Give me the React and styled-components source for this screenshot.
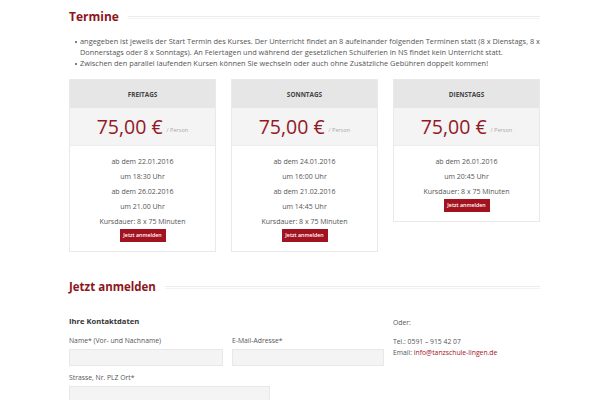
import React from "react";
import styled, { createGlobalStyle } from "styled-components";

const Global = createGlobalStyle`
  html, body { margin: 0; padding: 0; background: #fff; }
  body { font-family: "Open Sans", "Liberation Sans", sans-serif; color: #555; }
  * { box-sizing: border-box; }
`;

const Page = styled.div`
  width: 600px;
  padding: 8px 60px 0 69px;
`;

const SectionHead = styled.div`
  display: flex;
  align-items: center;
  margin-top: ${(p) => p.$mt || 0}px;
`;

const Title = styled.h2`
  margin: 0;
  font-size: ${(p) => p.$size || 12}px;
  line-height: 18px;
  font-weight: 700;
  color: #8c1520;
  white-space: nowrap;
`;

const TitleRule = styled.div`
  flex: 1;
  height: 3px;
  margin-left: 9px;
  border-top: 1px solid #ececec;
  border-bottom: 1px solid #f3f3f3;
`;

const Bullets = styled.ul`
  margin: 10px 0 0 0;
  padding: 0 0 0 11px;
  list-style: none;
  font-size: 7.4px;
  line-height: 11px;
  color: #555;
`;

const Item = styled.li`
  position: relative;
  &::before {
    content: "";
    position: absolute;
    left: -5px;
    top: 4.5px;
    width: 2.4px;
    height: 2.4px;
    border-radius: 50%;
    background: #555;
  }
`;

const Cards = styled.div`
  display: flex;
  align-items: flex-start;
  gap: 15px;
  margin-top: 10px;
`;

const Card = styled.div`
  width: 147px;
  flex: none;
  border: 1px solid #e9e9e9;
  background: #fff;
`;

const CardHead = styled.div`
  height: 28px;
  background: #e6e6e6;
  display: flex;
  align-items: center;
  justify-content: center;
  font-size: 6.4px;
  font-weight: 700;
  color: #444;
  text-transform: uppercase;
`;

const PriceBox = styled.div`
  height: 38px;
  background: #f4f4f4;
  display: flex;
  align-items: center;
  justify-content: center;
  gap: 4px;
  border-bottom: 1px solid #ececec;
`;

const Price = styled.span`
  font-size: 19.5px;
  color: #931826;
  line-height: 1;
`;

const Per = styled.span`
  font-size: 5.6px;
  color: #aaa;
  margin-top: 6px;
`;

const CardBody = styled.div`
  padding: 8px 0 7px;
  text-align: center;
  font-size: 7px;
  line-height: 15px;
  color: #555;
`;

const Button = styled.span`
  display: inline-block;
  width: 46px;
  height: 13px;
  line-height: 13px;
  background: #a3121f;
  color: #fff;
  font-size: 5.3px;
  font-weight: 600;
  vertical-align: top;
`;

const FormRow = styled.div`
  display: flex;
  margin-top: 19px;
`;

const FormMain = styled.div`
  width: 324px;
`;

const SubTitle = styled.div`
  font-size: 7.6px;
  line-height: 12px;
  font-weight: 700;
  color: #333;
`;

const FieldGrid = styled.div`
  display: grid;
  grid-template-columns: 154px 152px;
  column-gap: 9px;
  row-gap: 6px;
  margin-top: 8px;
`;

const Field = styled.div`
  display: flex;
  flex-direction: column;
`;

const Label = styled.label`
  font-size: 6.8px;
  line-height: 11px;
  color: #555;
  margin-bottom: 3px;
`;

const Input = styled.div`
  height: 17px;
  width: ${(p) => p.$w || "100%"};
  background: #f4f4f4;
  border: 1px solid #e8e8e8;
`;

const Aside = styled.div`
  padding-top: 2px;
  font-size: 6.8px;
  line-height: 11px;
  color: #555;
  p { margin: 0; }
`;

const Gap = styled.div`
  height: ${(p) => p.$h}px;
`;

const Link = styled.a`
  color: #a3121f;
  text-decoration: none;
`;

const cards = [
  {
    day: "Freitags",
    lines: ["ab dem 22.01.2016", "um 18:30 Uhr", "ab dem 26.02.2016", "um 21.00 Uhr", "Kursdauer: 8 x 75 Minuten"],
  },
  {
    day: "Sonntags",
    lines: ["ab dem 24.01.2016", "um 16:00 Uhr", "ab dem 21.02.2016", "um 14:45 Uhr", "Kursdauer: 8 x 75 Minuten"],
  },
  {
    day: "Dienstags",
    lines: ["ab dem 26.01.2016", "um 20:45 Uhr", "Kursdauer: 8 x 75 Minuten"],
  },
];

export default function App() {
  return (
    <Page>
      <Global />
      <SectionHead>
        <Title $size={12}>Termine</Title>
        <TitleRule />
      </SectionHead>
      <Bullets>
        <Item>
          angegeben ist jeweils der Start Termin des Kurses. Der Unterricht findet an 8 aufeinander folgenden Terminen statt (8 x Dienstags, 8 x
          Donnerstags oder 8 x Sonntags). An Feiertagen und während der gesetzlichen Schulferien in NS findet kein Unterricht statt.
        </Item>
        <Item>Zwischen den parallel laufenden Kursen können Sie wechseln oder auch ohne Zusätzliche Gebühren doppelt kommen!</Item>
      </Bullets>
      <Cards>
        {cards.map((c) => (
          <Card key={c.day}>
            <CardHead>{c.day}</CardHead>
            <PriceBox>
              <Price>75,00 €</Price>
              <Per>/ Person</Per>
            </PriceBox>
            <CardBody>
              {c.lines.map((l) => (
                <div key={l}>{l}</div>
              ))}
              <Button>Jetzt anmelden</Button>
            </CardBody>
          </Card>
        ))}
      </Cards>
      <SectionHead $mt={26}>
        <Title $size={11.5}>Jetzt anmelden</Title>
        <TitleRule />
      </SectionHead>
      <FormRow>
        <FormMain>
          <SubTitle>Ihre Kontaktdaten</SubTitle>
          <FieldGrid>
            <Field>
              <Label>Name* (Vor- und Nachname)</Label>
              <Input />
            </Field>
            <Field>
              <Label>E-Mail-Adresse*</Label>
              <Input />
            </Field>
            <Field>
              <Label>Strasse, Nr. PLZ Ort*</Label>
              <Input $w="201px" />
            </Field>
          </FieldGrid>
        </FormMain>
        <Aside>
          <p>Oder:</p>
          <Gap $h={8} />
          <p>Tel.: 0591 – 915 42 07</p>
          <p>
            Email: <Link href="#">info@tanzschule-lingen.de</Link>
          </p>
        </Aside>
      </FormRow>
    </Page>
  );
}
